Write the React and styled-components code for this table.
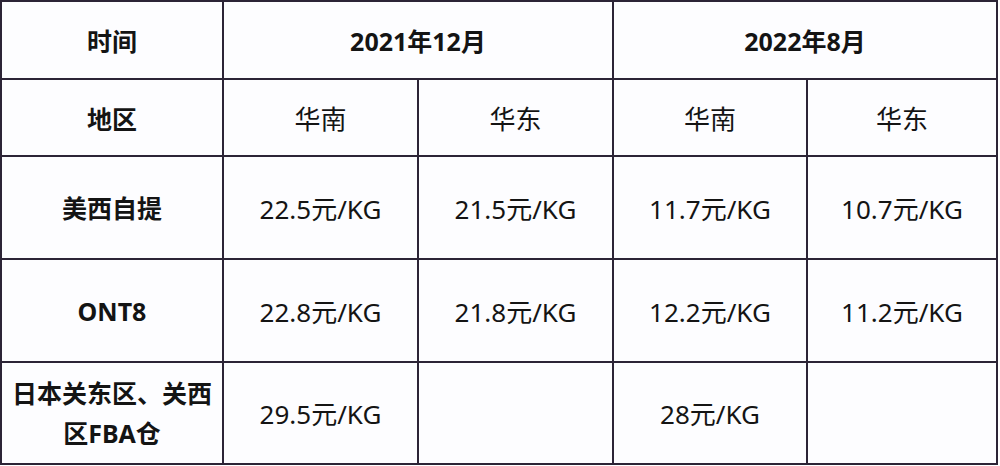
import { Fragment } from 'react';
import styled, { createGlobalStyle } from 'styled-components';

const GlobalStyle = createGlobalStyle`
  html, body {
    margin: 0;
    padding: 0;
    background: #ffffff;
  }
`;

const rows = [
  { label: '美西自提', prices: ['22.5元/KG', '21.5元/KG', '11.7元/KG', '10.7元/KG'] },
  { label: 'ONT8', prices: ['22.8元/KG', '21.8元/KG', '12.2元/KG', '11.2元/KG'] },
  { label: '日本关东区、关西区FBA仓', prices: ['29.5元/KG', '', '28元/KG', ''] },
];

export default function App() {
  return (
    <>
      <GlobalStyle />
      <PriceGrid>
        <Cell $bold>时间</Cell>
        <Cell $bold $span={2}>2021年12月</Cell>
        <Cell $bold $span={2}>2022年8月</Cell>

        <Cell $bold>地区</Cell>
        <Cell>华南</Cell>
        <Cell>华东</Cell>
        <Cell>华南</Cell>
        <Cell>华东</Cell>

        {rows.map((row) => (
          <Fragment key={row.label}>
            <Cell $bold>
              <Label>{row.label}</Label>
            </Cell>
            {row.prices.map((p, i) => (
              <Cell key={i}>{p}</Cell>
            ))}
          </Fragment>
        ))}
      </PriceGrid>
    </>
  );
}

const PriceGrid = styled.div`
  display: grid;
  grid-template-columns: 220px 193px 193px 192px 188px;
  grid-template-rows: 76px 75px 101px 101px 100px;
  gap: 2px;
  padding: 2px;
  width: 998px;
  box-sizing: border-box;
  background: #2c2436;
`;

const Cell = styled.div`
  grid-column: span ${(p) => p.$span || 1};
  display: flex;
  align-items: center;
  justify-content: center;
  background: #fdfdff;
  color: #141414;
  font-family: 'Noto Sans', 'Noto Sans CJK SC', sans-serif;
  font-size: ${(p) => (p.$bold ? '25px' : '26px')};
  font-weight: ${(p) => (p.$bold ? 700 : 400)};
  text-align: center;
`;

const Label = styled.span`
  display: block;
  width: 200px;
  line-height: 40px;
`;
